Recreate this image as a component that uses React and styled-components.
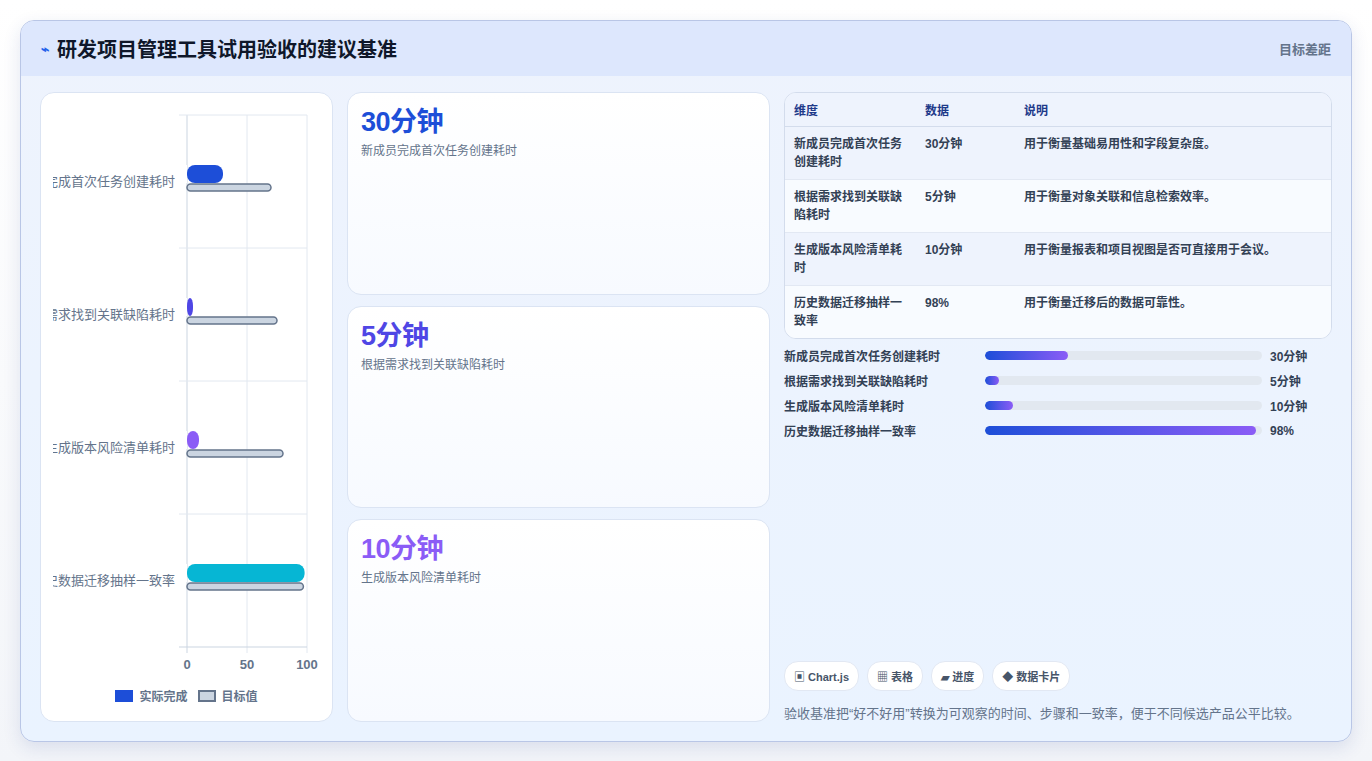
import React from "react";
import styled, { createGlobalStyle } from "styled-components";

const Global = createGlobalStyle`
  html, body { margin: 0; padding: 0; background: #ffffff; }
  body { font-family: "Liberation Sans", "Noto Sans CJK SC", sans-serif; }
`;

const Page = styled.div`
  width: 1372px;
  height: 761px;
  padding: 20px;
  box-sizing: border-box;
  background: linear-gradient(180deg, #ffffff 0%, #f3f5f9 100%);
`;

const Shell = styled.div`
  height: 720px;
  border: 1px solid #b9c6e6;
  border-radius: 14px;
  background: linear-gradient(180deg, #eef3fd 0%, #eaf3ff 100%);
  box-shadow: 0 6px 18px rgba(30, 58, 138, 0.12);
  overflow: hidden;
  display: flex;
  flex-direction: column;
`;

const Header = styled.div`
  height: 55px;
  flex: none;
  background: #dde7fd;
  display: flex;
  align-items: center;
  justify-content: space-between;
  padding: 0 20px;
`;

const Title = styled.h1`
  margin: 0;
  font-size: 20px;
  font-weight: 700;
  color: #0f172a;
  display: flex;
  align-items: center;
  gap: 8px;
`;

const Bolt = styled.span`
  color: #2563eb;
  font-size: 14px;
`;

const HeaderNote = styled.span`
  font-size: 13px;
  color: #64748b;
  font-weight: 600;
`;

const Body = styled.div`
  flex: 1;
  display: grid;
  grid-template-columns: 293px 423px 1fr;
  gap: 14px;
  padding: 16px 19px 19px 19px;
  min-height: 0;
`;

const Panel = styled.div`
  background: #ffffff;
  border: 1px solid #dbe4f3;
  border-radius: 14px;
  box-sizing: border-box;
`;

const ChartPanel = styled(Panel)`
  display: flex;
  flex-direction: column;
  align-items: center;
  overflow: hidden;
`;

const Legend = styled.div`
  display: flex;
  gap: 10px;
  font-size: 12px;
  font-weight: 700;
  color: #64748b;
  margin-top: 2px;
`;

const LegendItem = styled.span`
  display: flex;
  align-items: center;
  gap: 6px;
`;

const Swatch = styled.span`
  width: 18px;
  height: 12px;
  background: ${(p) => p.$bg};
  border: ${(p) => (p.$outline ? "2px solid #64748b" : "none")};
  box-sizing: border-box;
`;

const CardCol = styled.div`
  display: grid;
  grid-template-rows: repeat(3, 1fr);
  gap: 11px;
`;

const StatCard = styled(Panel)`
  padding: 7px 13px;
  background: linear-gradient(180deg, #ffffff 0%, #f7faff 100%);
`;

const StatValue = styled.div`
  font-size: 27px;
  font-weight: 700;
  color: ${(p) => p.$color};
  letter-spacing: -0.5px;
`;

const StatLabel = styled.div`
  font-size: 12px;
  color: #64748b;
  margin-top: 2px;
`;

const RightCol = styled.div`
  display: flex;
  flex-direction: column;
  min-width: 0;
`;

const Table = styled.table`
  width: 100%;
  border-collapse: separate;
  border-spacing: 0;
  border: 1px solid #d3dcec;
  border-radius: 12px;
  overflow: hidden;
  font-size: 12px;
  background: #f8fbff;
`;

const Th = styled.th`
  text-align: left;
  font-weight: 700;
  color: #1e3a8a;
  padding: 8px 9px;
  background: #eef3fd;
  border-bottom: 1px solid #d3dcec;
  width: ${(p) => p.$w || "auto"};
`;

const Td = styled.td`
  vertical-align: top;
  padding: 8px 9px;
  line-height: 18px;
  color: #334155;
  font-weight: ${(p) => (p.$strong ? 700 : 600)};
  border-top: ${(p) => (p.$first ? "none" : "1px solid #e2e8f3")};
`;

const Tr = styled.tr`
  background: ${(p) => (p.$alt ? "#eef3fd" : "#f8fbff")};
`;

const Progress = styled.div`
  display: flex;
  flex-direction: column;
  gap: 10px;
  margin-top: 8px;
`;

const ProgRow = styled.div`
  display: grid;
  grid-template-columns: 201px 277px 1fr;
  align-items: center;
  height: 15px;
  font-size: 12px;
  font-weight: 700;
  color: #334155;
`;

const Track = styled.div`
  height: 9px;
  border-radius: 5px;
  background: #e2e8f0;
  overflow: hidden;
`;

const Fill = styled.div`
  height: 100%;
  border-radius: 5px;
  background: linear-gradient(90deg, #1d4ed8, #8b5cf6);
`;

const ProgValue = styled.span`
  padding-left: 8px;
`;

const Spacer = styled.div`
  flex: 1;
`;

const Chips = styled.div`
  display: flex;
  gap: 8px;
`;

const Chip = styled.span`
  font-size: 11px;
  font-weight: 700;
  color: #475569;
  background: #ffffff;
  border: 1px solid #e2e8f3;
  border-radius: 14px;
  padding: 6px 9px;
`;

const Footnote = styled.p`
  margin: 12px 0 0;
  font-size: 13px;
  color: #64748b;
`;

const rows = [
  { name: "新成员完成首次任务创建耗时", value: "30分钟", actual: 30, target: 70, color: "#1d4ed8", desc: "用于衡量基础易用性和字段复杂度。" },
  { name: "根据需求找到关联缺陷耗时", value: "5分钟", actual: 5, target: 75, color: "#4f46e5", desc: "用于衡量对象关联和信息检索效率。" },
  { name: "生成版本风险清单耗时", value: "10分钟", actual: 10, target: 80, color: "#8b5cf6", desc: "用于衡量报表和项目视图是否可直接用于会议。" },
  { name: "历史数据迁移抽样一致率", value: "98%", actual: 98, target: 97, color: "#06b6d4", desc: "用于衡量迁移后的数据可靠性。" },
];

const tableNames = ["新成员完成首次任务\n创建耗时", "根据需求找到关联缺\n陷耗时", "生成版本风险清单耗\n时", "历史数据迁移抽样一\n致率"];

function Chart() {
  const x0 = 146, scale = 1.2, top = 22, band = 133;
  return (
    <svg width="292" height="592">
      <defs>
        <clipPath id="lbl"><rect x="12" y="0" width="280" height="592" /></clipPath>
      </defs>
      {[0, 50, 100].map((v) => (
        <line key={v} x1={x0 + v * scale} x2={x0 + v * scale} y1={top} y2={top + band * 4 + 6} stroke={v === 0 ? "#cbd5e1" : "#e2e8f0"} />
      ))}
      {[0, 1, 2, 3, 4].map((i) => (
        <line key={i} x1={x0 - 8} x2={x0 + 120} y1={top + band * i} y2={top + band * i} stroke={i === 4 ? "#cbd5e1" : "#e2e8f0"} />
      ))}
      {rows.map((r, i) => {
        const cy = top + band * i + 66;
        return (
          <g key={i}>
            <text clipPath="url(#lbl)" x={x0 - 12} y={cy + 5} textAnchor="end" fontSize="13" fill="#64748b" fontFamily="Liberation Sans, Noto Sans CJK SC, sans-serif">{r.name}</text>
            <rect x={x0} y={cy - 16} width={Math.max(r.actual * scale, 6)} height={18} rx={8} fill={r.color} />
            <rect x={x0 - 6} y={cy - 16} width={6} height={18} fill="#fff" />
            <rect x={x0} y={cy + 3} width={r.target * scale} height={7} rx={3.5} fill="#cbd5e1" stroke="#64748b" strokeWidth="1.5" />
          </g>
        );
      })}
      {[0, 50, 100].map((v) => (
        <text key={v} x={x0 + v * scale} y={top + band * 4 + 22} textAnchor="middle" fontSize="13" fontWeight="700" fill="#64748b" fontFamily="Liberation Sans, sans-serif">{v}</text>
      ))}
    </svg>
  );
}

export default function App() {
  return (
    <Page>
      <Global />
      <Shell>
        <Header>
          <Title><Bolt>⌁</Bolt>研发项目管理工具试用验收的建议基准</Title>
          <HeaderNote>目标差距</HeaderNote>
        </Header>
        <Body>
          <ChartPanel>
            <Chart />
            <Legend>
              <LegendItem><Swatch $bg="#1d4ed8" />实际完成</LegendItem>
              <LegendItem><Swatch $bg="#cbd5e1" $outline />目标值</LegendItem>
            </Legend>
          </ChartPanel>
          <CardCol>
            {rows.slice(0, 3).map((r) => (
              <StatCard key={r.name}>
                <StatValue $color={r.color}>{r.value}</StatValue>
                <StatLabel>{r.name}</StatLabel>
              </StatCard>
            ))}
          </CardCol>
          <RightCol>
            <Table>
              <thead>
                <tr>
                  <Th $w="113px">维度</Th>
                  <Th $w="81px">数据</Th>
                  <Th>说明</Th>
                </tr>
              </thead>
              <tbody>
                {rows.map((r, i) => (
                  <Tr key={r.name} $alt={i % 2 === 0}>
                    <Td $strong $first={i === 0} style={{ whiteSpace: "pre-line" }}>{tableNames[i]}</Td>
                    <Td $first={i === 0}>{r.value}</Td>
                    <Td $first={i === 0}>{r.desc}</Td>
                  </Tr>
                ))}
              </tbody>
            </Table>
            <Progress>
              {rows.map((r) => (
                <ProgRow key={r.name}>
                  <span>{r.name}</span>
                  <Track><Fill style={{ width: `${r.actual}%` }} /></Track>
                  <ProgValue>{r.value}</ProgValue>
                </ProgRow>
              ))}
            </Progress>
            <Spacer />
            <Chips>
              <Chip>▣ Chart.js</Chip>
              <Chip>▦ 表格</Chip>
              <Chip>▰ 进度</Chip>
              <Chip>◆ 数据卡片</Chip>
            </Chips>
            <Footnote>验收基准把“好不好用”转换为可观察的时间、步骤和一致率，便于不同候选产品公平比较。</Footnote>
          </RightCol>
        </Body>
      </Shell>
    </Page>
  );
}
